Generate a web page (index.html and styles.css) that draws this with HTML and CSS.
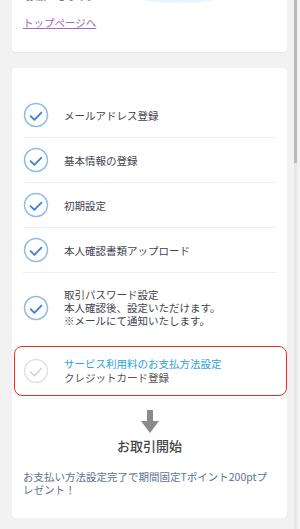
FILE: index.html
```html
<!DOCTYPE html>
<html lang="ja">
<head>
    <meta charset="UTF-8">
    <meta name="viewport" content="width=device-width, initial-scale=1.0">
    <title>お取引開始までの流れ</title>
    <link rel="stylesheet" href="styles.css">
</head>
<body>
    <div class="page">
        <section class="card card-top">
            <div class="hero">
                <p class="hero-note">お願いします。</p>
            </div>
            <a class="top-link" href="#">トップページへ</a>
        </section>

        <section class="card card-steps">
            <ul class="steps">
                <li class="step">
                    <svg class="check" viewBox="0 0 26 26"><circle cx="13" cy="13" r="11.5"/><path d="M7.6 14.2 L11.4 17.8 L18.4 10.6"/></svg>
                    <span>メールアドレス登録</span>
                </li>
                <li class="step">
                    <svg class="check" viewBox="0 0 26 26"><circle cx="13" cy="13" r="11.5"/><path d="M7.6 14.2 L11.4 17.8 L18.4 10.6"/></svg>
                    <span>基本情報の登録</span>
                </li>
                <li class="step">
                    <svg class="check" viewBox="0 0 26 26"><circle cx="13" cy="13" r="11.5"/><path d="M7.6 14.2 L11.4 17.8 L18.4 10.6"/></svg>
                    <span>初期設定</span>
                </li>
                <li class="step">
                    <svg class="check" viewBox="0 0 26 26"><circle cx="13" cy="13" r="11.5"/><path d="M7.6 14.2 L11.4 17.8 L18.4 10.6"/></svg>
                    <span>本人確認書類アップロード</span>
                </li>
                <li class="step step-tall">
                    <svg class="check" viewBox="0 0 26 26"><circle cx="13" cy="13" r="11.5"/><path d="M7.6 14.2 L11.4 17.8 L18.4 10.6"/></svg>
                    <div class="step-text">
                        <p>取引パスワード設定</p>
                        <p>本人確認後、設定いただけます。</p>
                        <p>※メールにて通知いたします。</p>
                    </div>
                </li>
                <li class="step step-current">
                    <svg class="check check-todo" viewBox="0 0 26 26"><circle cx="13" cy="13" r="11.5"/><path d="M7.6 14.2 L11.4 17.8 L18.4 10.6"/></svg>
                    <div class="step-text">
                        <p class="step-title">サービス利用料のお支払方法設定</p>
                        <p>クレジットカード登録</p>
                    </div>
                </li>
            </ul>

            <div class="start">
                <svg class="arrow" viewBox="0 0 24 24"><path d="M9 0 H15 V11 H21 L12 23 L3 11 H9 Z"/></svg>
                <p>お取引開始</p>
            </div>

            <p class="campaign">お支払い方法設定完了で期間固定Tポイント200ptプレゼント！</p>
        </section>
    </div>

    <div class="scrollbar"><div class="scrollbar-thumb"></div></div>
</body>
</html>
```

FILE: styles.css
```css
body {
    margin: 0;
    font-family: "Noto Sans CJK JP", "Noto Sans", sans-serif;
    font-size: 10.5px;
    color: #3f444e;
    background: #f2f2f2;
    overflow: hidden;
}

p {
    margin: 0;
}

.page {
    padding: 0 13px 0 12px;
}

.card {
    background: white;
    border-radius: 4px;
    box-shadow: 0 1px 2px rgba(0, 0, 0, 0.05);
}

.card-top {
    margin-top: -47px;
    padding: 10px 11px 22px;
}

.hero {
    position: relative;
    height: 40px;
    display: flex;
    align-items: flex-end;
}

.hero::before {
    content: "";
    position: absolute;
    left: 62px;
    bottom: 0;
    width: 190px;
    height: 70px;
    border-radius: 50%;
    background: linear-gradient(90deg, #e3f2fa 0%, #e8f5fb 55%, #ffffff 100%);
}

.hero-note {
    position: relative;
    line-height: 14px;
    color: #666;
    margin-left: 2px;
}

.top-link {
    display: inline-block;
    margin-top: 13px;
    line-height: 14px;
    color: #9a6cc4;
    text-decoration: underline;
}

.card-steps {
    margin-top: 16px;
    padding: 25px 11px 22px;
}

.steps {
    list-style: none;
    margin: 0;
    padding: 0;
    border-bottom: 1px solid #eeeeee;
}

.step {
    display: flex;
    align-items: center;
    gap: 15px;
    padding: 9px 0;
    border-bottom: 1px solid #eeeeee;
}

.step-tall {
    padding: 15px 0;
    border-bottom: none;
}

.step-text {
    line-height: 13px;
}

.step-current {
    margin: 4px -11px 2px -9px;
    padding: 10px 9px 10px 8px;
    border: 1.5px solid #ee2a2a;
    border-radius: 8px;
}

.step-current .step-text {
    line-height: 14px;
    color: #555;
}

.step-title {
    color: #2ba3da;
}

.check {
    width: 26px;
    height: 26px;
    flex-shrink: 0;
    fill: none;
    stroke-linecap: round;
    stroke-linejoin: round;
}

.check circle {
    stroke: #8fbbea;
    stroke-width: 1.5;
}

.check path {
    stroke: #3b7ed8;
    stroke-width: 1.8;
}

.check-todo circle {
    stroke: #e2e2e2;
}

.check-todo path {
    stroke: #cfcfcf;
    stroke-width: 1.4;
}

.start {
    display: flex;
    flex-direction: column;
    align-items: center;
    margin-top: 11px;
}

.arrow {
    width: 24px;
    height: 24px;
    fill: #8a8a8a;
}

.start p {
    margin-top: 3px;
    font-size: 13px;
    line-height: 18px;
    font-weight: 500;
    color: #444;
}

.campaign {
    margin-top: 15px;
    line-height: 13px;
    color: #62718f;
}

.scrollbar {
    position: fixed;
    top: 0;
    bottom: 0;
    right: 3px;
    width: 3px;
    background: #e6e6e6;
}

.scrollbar-thumb {
    height: 163px;
    background: #b9b9b9;
}
```
